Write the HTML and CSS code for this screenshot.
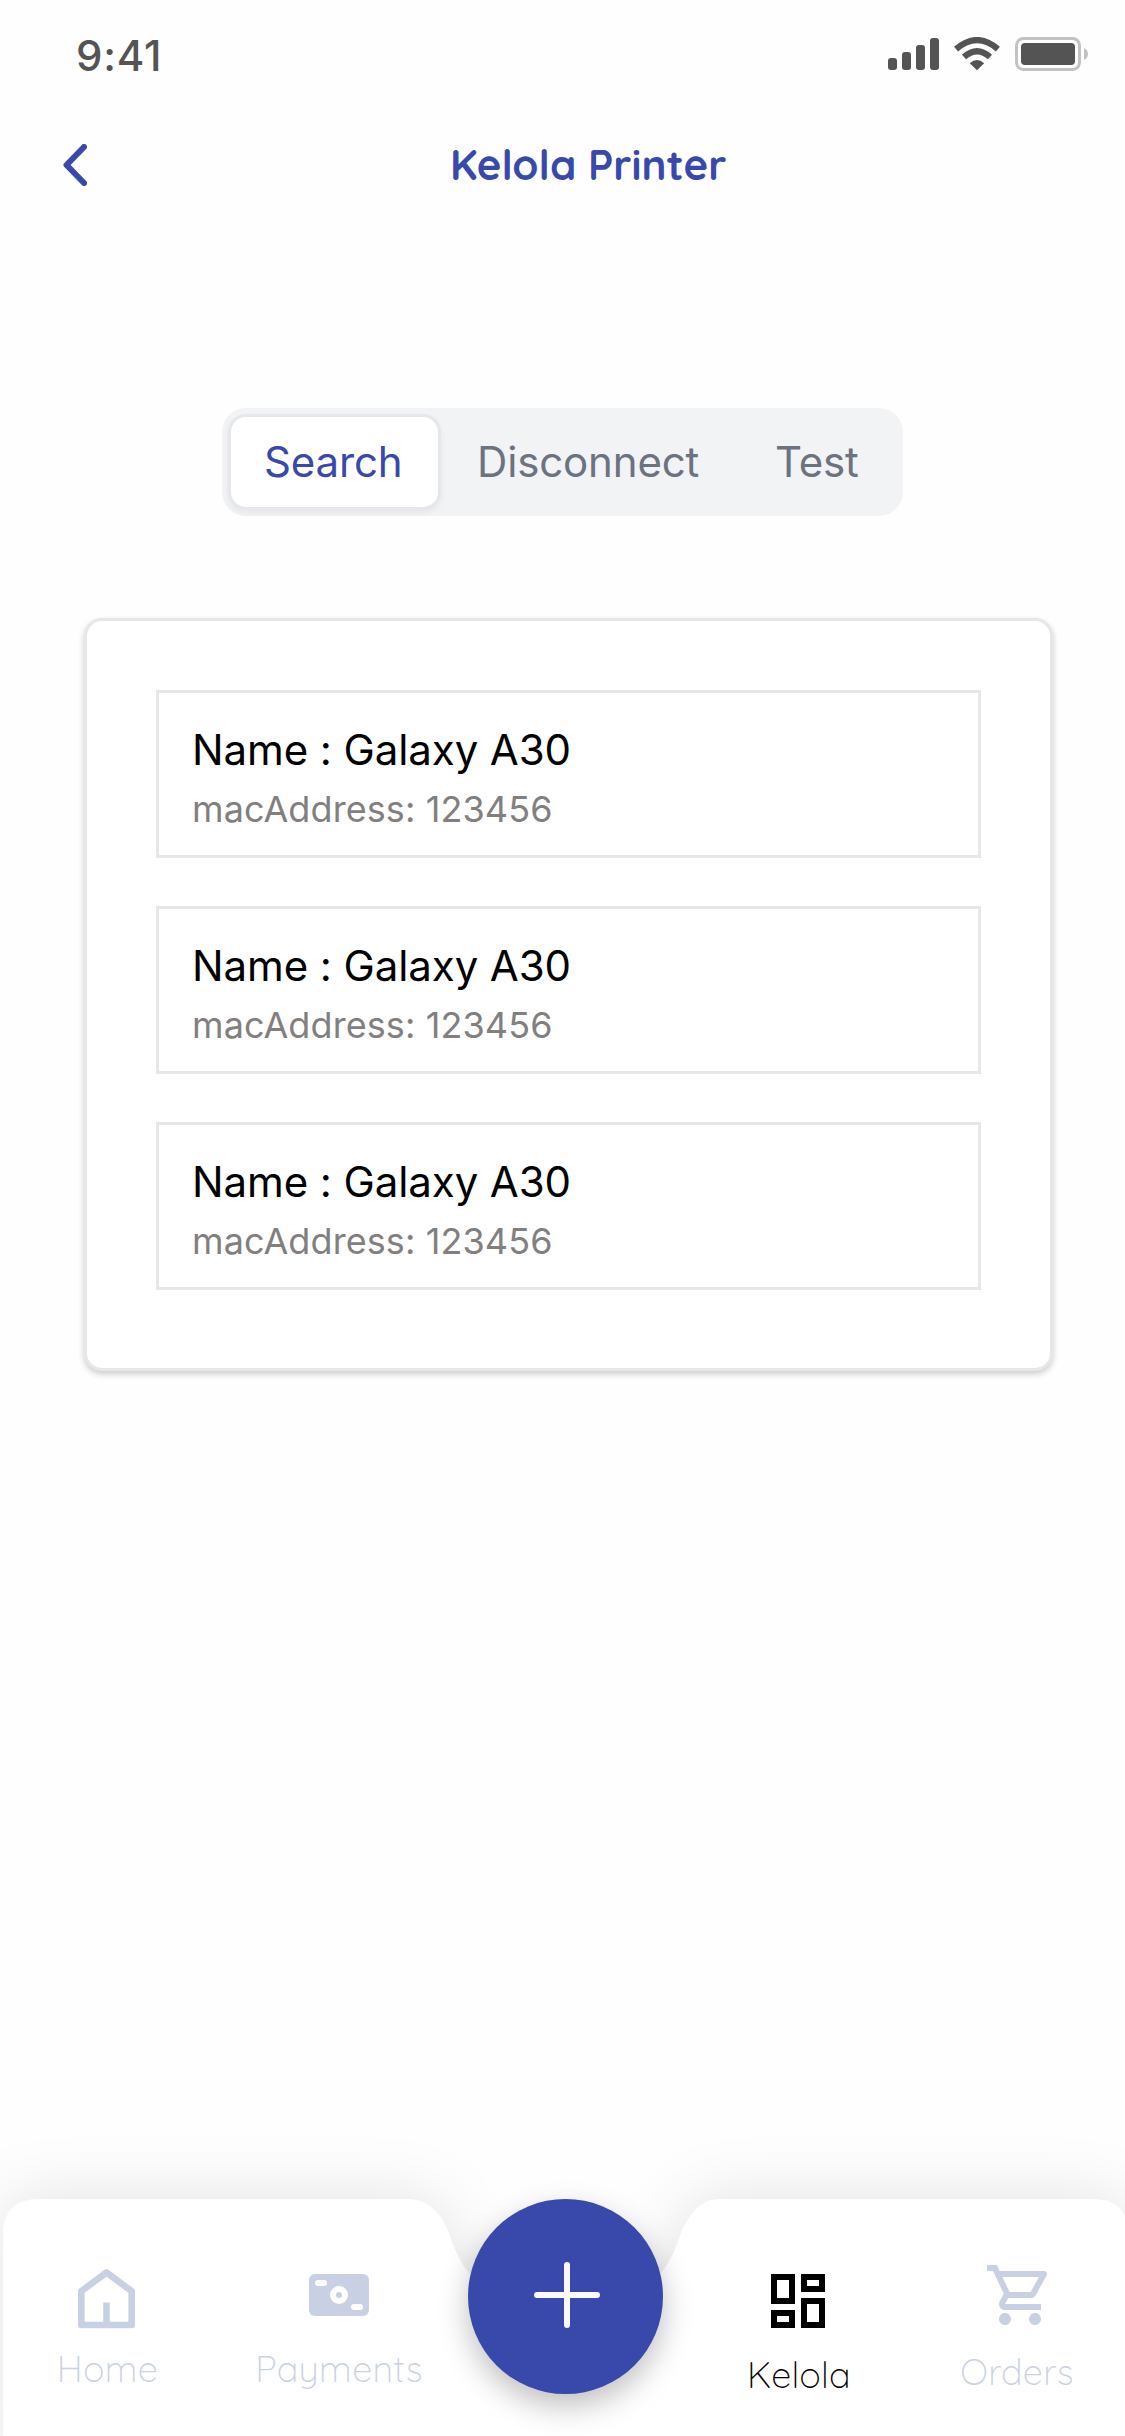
FILE: index.html
```html
<!DOCTYPE html>
<html lang="id">
<head>
<meta charset="utf-8">
<title>Kelola Printer</title>
<link rel="stylesheet" href="styles.css">
</head>
<body>
<div class="screen">
  <header class="status">
    <span class="time">9:41</span>
    <svg class="status-icons" width="201" height="34" viewBox="0 0 201 34">
      <g fill="#545454">
        <rect x="0" y="21" width="9" height="12" rx="3"/>
        <rect x="14" y="15" width="9" height="18" rx="3"/>
        <rect x="28" y="8" width="9" height="25" rx="3"/>
        <rect x="42" y="1" width="9" height="32" rx="3"/>
        <path d="M89 33.3L81.8 26.2Q89 19.8 96.2 26.2Z"/>
        <rect x="133" y="6" width="54" height="22" rx="4"/>
      </g>
      <g fill="none" stroke="#545454" stroke-width="6.2">
        <path d="M68.1 12.1Q89-5.9 109.900 12.100"/>
        <path d="M76 20Q89 8.500 102 20"/>
      </g>
      <rect x="128.500" y="1.500" width="63" height="31" rx="7" fill="none" stroke="#c2c2c2" stroke-width="3"/>
      <path d="M196 11Q200 13 200 17T196 23Z" fill="#c2c2c2"/>
    </svg>
  </header>

  <div class="appbar">
    <svg class="back" width="24" height="42" viewBox="0 0 24 42"><path d="M21 3L3.500 21L21 39"/></svg>
    <h1 class="title">Kelola Printer</h1>
  </div>

  <div class="tabs">
    <span class="tab tab-active">Search</span>
    <span class="tab tab-disconnect">Disconnect</span>
    <span class="tab tab-test">Test</span>
  </div>

  <main class="card">
    <section class="device">
      <p class="name">Name : Galaxy A30</p>
      <p class="mac">macAddress: 123456</p>
    </section>
    <section class="device">
      <p class="name">Name : Galaxy A30</p>
      <p class="mac">macAddress: 123456</p>
    </section>
    <section class="device">
      <p class="name">Name : Galaxy A30</p>
      <p class="mac">macAddress: 123456</p>
    </section>
  </main>

  <nav class="nav">
    <svg class="nav-bg" width="1125" height="237" viewBox="0 0 1125 237">
      <path d="M3 260V36Q3 0 39 0H408C428 0 441 14 449 34C455 53 461 64 469 74C492 104 526 120 565 120C604 120 638 104 661 74C669 64 675 53 681 34C689 14 702 0 720 0H1092Q1128 0 1128 36V260Z"/>
    </svg>
    <a class="item home">
      <svg width="57" height="60" viewBox="0 0 57 60"><path d="M3.300 56V22.200L28.500 3.500L53.700 22.200V56ZM28.500 33.500V56" fill="none" stroke="#c8d1e3" stroke-width="6.600" stroke-linejoin="round"/></svg>
      <span class="label">Home</span>
    </a>
    <a class="item pay">
      <svg width="60" height="42" viewBox="0 0 60 42"><rect width="60" height="42" rx="6" fill="#c8d1e3"/><g fill="#fff"><rect x="6" y="6" width="12" height="6" rx="3"/><rect x="42" y="30" width="12" height="6" rx="3"/><circle cx="30" cy="21" r="9"/></g><circle cx="30" cy="21" r="3" fill="#c8d1e3"/></svg>
      <span class="label">Payments</span>
    </a>
    <a class="fab">
      <svg width="66" height="66" viewBox="0 0 66 66"><path d="M33 3V63M3 33H63" stroke="#f9f9fc" stroke-width="6" stroke-linecap="round"/></svg>
    </a>
    <a class="item manage">
      <svg width="54" height="54" viewBox="3 3 18 18"><path d="M19 5v2h-4V5h4M9 5v6H5V5h4m10 8v6h-4v-6h4M9 17v2H5v-2h4M21 3h-8v6h8V3zM11 3H3v10h8V3zm10 8h-8v10h8V11zm-10 4H3v6h8v-6z"/></svg>
      <span class="label">Kelola</span>
    </a>
    <a class="item orders">
      <svg width="60" height="60" viewBox="1 2 20 20"><path fill="#c8d1e3" d="M15.550 13c.75 0 1.410-.41 1.750-1.030l3.580-6.490c.37-.66-.11-1.480-.87-1.480H5.210l-.94-2H1v2h2l3.600 7.590-1.350 2.440C4.520 15.370 5.480 17 7 17h12v-2H7l1.100-2h7.450zM6.160 6h12.150l-2.760 5H8.530L6.160 6zM7 18c-1.100 0-1.990.9-1.990 2S5.900 22 7 22s2-.9 2-2-.9-2-2-2zm10 0c-1.100 0-1.990.9-1.990 2s.89 2 1.990 2 2-.9 2-2-.9-2-2-2z"/></svg>
      <span class="label">Orders</span>
    </a>
  </nav>
</div>
</body>
</html>
```
FILE: styles.css
```css
* { box-sizing: border-box; margin: 0; }
body { background: #fefefe; font-family: Inter, "Liberation Sans", sans-serif; }
.screen { height: 2436px; display: flex; flex-direction: column; overflow: hidden; }

.status { height: 132px; padding: 37px 36px 0 76px; display: flex; justify-content: space-between; align-items: flex-start; }
.time { font-size: 42px; font-weight: 550; line-height: 38px; letter-spacing: .8px; color: #545454; }

.appbar { height: 66px; padding-left: 63px; display: flex; align-items: center; }
.back { fill: none; stroke: #3949ab; stroke-width: 6; stroke-linecap: round; stroke-linejoin: round; }
.title {
  width: 276px; margin-left: 363px;
  font-family: Quicksand, Inter, sans-serif;
  font-size: 42px; font-weight: 700; line-height: 60px; white-space: nowrap; color: #3949ab;
}

.tabs { width: 681px; height: 108px; margin: 210px 0 0 222px; padding: 6px; border-radius: 24px; background: #f2f3f5; display: flex; }
.tab { height: 96px; line-height: 96px; font-size: 42px; letter-spacing: -.15px; white-space: nowrap; color: #6b7280; }
.tab-active { width: 213px; padding-left: 33px; line-height: 90px; border: 3px solid #e5e7eb; border-radius: 18px; background: #fff; color: #3949ab; box-shadow: 0 3px 6px rgba(0, 0, 0, .05); }
.tab-disconnect { width: 299px; padding-left: 36px; }
.tab-test { padding-left: 35px; }

.card { width: 969px; height: 753px; margin: 102px 0 0 84px; padding: 69px; display: flex; flex-direction: column; gap: 48px; background: #fff; border: 3px solid #e5e7eb; border-radius: 18px; box-shadow: 0 3px 6px rgba(0, 0, 0, .2); }
.device { width: 825px; height: 168px; border: 3px solid #e5e7eb; padding: 25px 0 0 33px; }
.name { font-size: 42px; line-height: 63px; letter-spacing: -.1px; white-space: nowrap; color: #000; }
.mac { font-size: 36px; line-height: 57px; letter-spacing: .1px; white-space: nowrap; color: #827f7f; }

.nav { position: relative; height: 237px; margin-top: auto; display: grid; grid-template-columns: 216px 252px 195px 270px 168px; }
.nav-bg { position: absolute; left: 0; top: 0; overflow: visible; fill: #fff; filter: drop-shadow(0 -3px 30px rgba(0, 0, 0, .1)); }
.item { position: relative; display: flex; flex-direction: column; align-items: center; }
.label { font-family: Quicksand, Inter, sans-serif; font-size: 36px; font-weight: 300; line-height: 45px; letter-spacing: .3px; color: #c8d1e3; }
.home { padding: 70px 3px 0 0; gap: 17px; }
.home .label { margin-left: 2px; }
.pay { padding: 75px 6px 0 0; gap: 30px; }
.manage { padding-top: 75px; gap: 24px; }
.manage .label { margin-left: 2px; }
.orders { padding-top: 66px; gap: 24px; }
.manage .label { color: #000; }
.fab { position: relative; width: 195px; height: 195px; padding: 63px 0 0 66px; border-radius: 50%; background: #3949ab; box-shadow: 0 12px 30px rgba(0, 0, 0, .25); }
```
